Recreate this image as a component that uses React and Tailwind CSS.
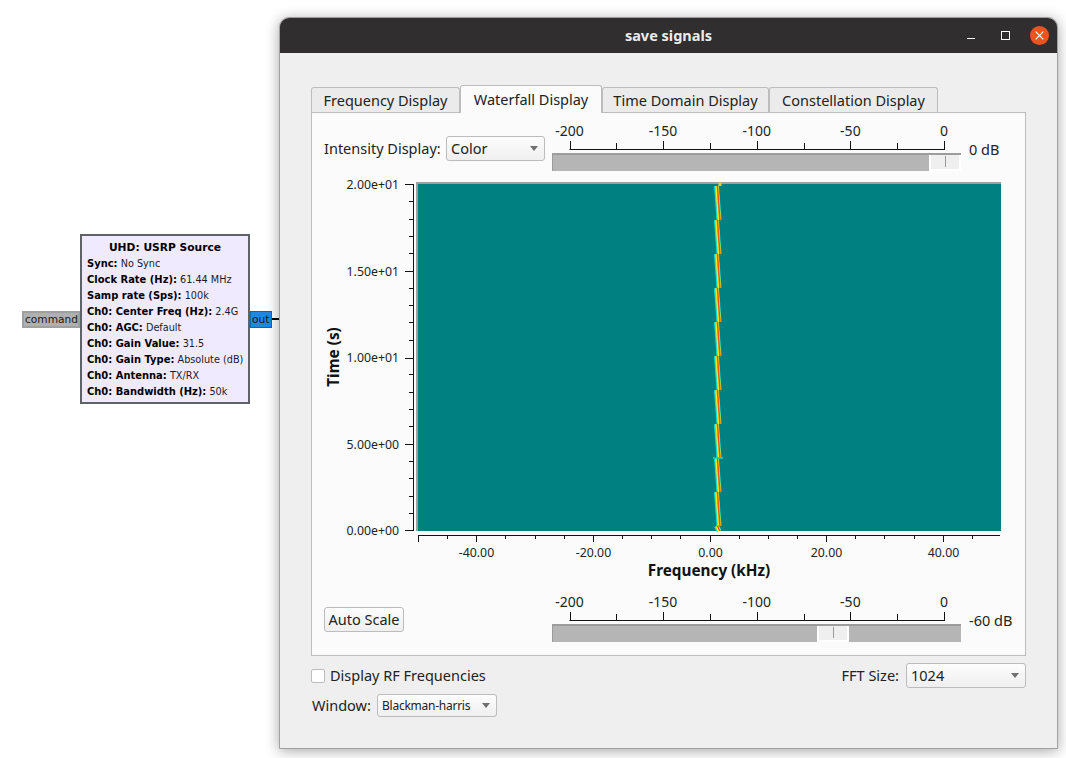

const blockRows = [
  ["Sync:", "No Sync"],
  ["Clock Rate (Hz):", "61.44 MHz"],
  ["Samp rate (Sps):", "100k"],
  ["Ch0: Center Freq (Hz):", "2.4G"],
  ["Ch0: AGC:", "Default"],
  ["Ch0: Gain Value:", "31.5"],
  ["Ch0: Gain Type:", "Absolute (dB)"],
  ["Ch0: Antenna:", "TX/RX"],
  ["Ch0: Bandwidth (Hz):", "50k"],
];

function Combo({ label, w, h, small }) {
  return (
    <div className={`flex items-center justify-between rounded-[3px] border border-[#bcbcbc] bg-gradient-to-b from-[#fdfdfd] to-[#efefef] pl-1 pr-[6px] ${w} ${h} ${small ? "text-[12px] tracking-[-0.25px]" : "text-[14.5px]"}`}>
      <span>{label}</span>
      <svg width="8" height="5" viewBox="0 0 8 5"><path d="M0 0h8L4 5z" fill="#707070" /></svg>
    </div>
  );
}

function Slider({ handle }) {
  const major = [-200, -150, -100, -50, 0];
  const minor = [-175, -125, -75, -25];
  const x = (v) => 17.5 + ((v + 200) / 200) * 374.5;
  return (
    <div className="w-[409px]">
      <svg width="409" height="30" className="block overflow-visible">
        <path d="M17.5 26.5H392" stroke="#111" fill="none" />
        {major.map((v) => (
          <g key={v}>
            <path d={`M${Math.round(x(v)) + 0.5} 18V27`} stroke="#111" />
            <text x={x(v)} y="12.5" textAnchor="middle" className="fill-[#222] text-[14px]">{v}</text>
          </g>
        ))}
        {minor.map((v) => (
          <path key={v} d={`M${Math.round(x(v)) + 0.5} 20V27`} stroke="#111" />
        ))}
      </svg>
      <div className="relative h-[18px] border-t-2 border-l border-[#9c9c9c] bg-[#b5b5b5]">
        <div className={`absolute top-0 flex h-[16px] w-[32px] justify-center border-2 border-t-0 border-white bg-[#efefef] ${handle}`}>
          <div className="mt-[1px] h-[11px] w-px bg-[#9a9a9a]" />
        </div>
      </div>
    </div>
  );
}

function Plot() {
  const bx = [-45, -35, -30, -25, -15, -10, -5, 5, 10, 15, 25, 30, 35, 45];
  const fx = (v) => Math.round(94 + ((v + 50) / 100) * 583) + 0.5;
  const Y = [11, 98, 184.5, 271, 357];
  const Ylabel = ["2.00e+01", "1.50e+01", "1.00e+01", "5.00e+00", "0.00e+00"];
  const segs = Array.from({ length: 11 }, (_, i) => 13 + i * 34);
  const minorY = [];
  for (let i = 0; i < 20; i++) if (i % 5) minorY.push(11 + i * 17.31);
  return (
    <svg width="690" height="421" className="block">
      <rect x="92" y="9" width="585" height="349" fill="#a0a0a0" />
      <rect x="94" y="11" width="583" height="347" fill="#008080" />
      {segs.map((s) => (
        <g key={s} fill="none">
          <path d={`M392.5 ${s}L395 ${Math.min(s + 34, 358)}`} stroke="#10e0d0" strokeWidth="5" />
          <path d={`M392.9 ${s}L395.4 ${Math.min(s + 34, 358)}`} stroke="#f4ee10" strokeWidth="3.2" />
          <path d={`M393.4 ${s}L395.9 ${Math.min(s + 34, 358)}`} stroke="#f8500a" strokeWidth="1.5" />
        </g>
      ))}
      <path d="M396 9.5V13" stroke="#e8d020" strokeWidth="3" />
      <path d="M389 285H399" stroke="#20c8b8" strokeWidth="1.6" />
      <path d="M89.5 11V358" stroke="#111" fill="none" />
      {Y.map((y, i) => (
        <g key={y}>
          <path d={`M81 ${Math.round(y) + 0.5}H90`} stroke="#111" />
          <text x="75" y={y + 4.5} textAnchor="end" className="fill-[#222] text-[12.3px]">{Ylabel[i]}</text>
        </g>
      ))}
      {minorY.map((y) => (
        <path key={y} d={`M85 ${Math.round(y) + 0.5}H90`} stroke="#111" />
      ))}
      <path d="M94 362.5H676" stroke="#111" />
      {[-50, -40, -20, 0, 20, 40].map((v) => (
        <path key={v} d={`M${fx(v)} 362V369`} stroke="#111" />
      ))}
      {bx.map((v) => (
        <path key={v} d={`M${fx(v)} 362V366`} stroke="#111" />
      ))}
      {[-40, -20, 0, 20, 40].map((v) => (
        <text key={v} x={fx(v)} y="384" textAnchor="middle" className="fill-[#222] text-[12.3px]">{v.toFixed(2)}</text>
      ))}
      <text x="385" y="402.5" textAnchor="middle" className="fill-[#111] text-[15.3px] font-bold">Frequency (kHz)</text>
      <text x="0" y="0" textAnchor="middle" transform="translate(15 184) rotate(-90)" className="fill-[#111] text-[15.3px] font-bold">Time (s)</text>
    </svg>
  );
}

function Tab({ label, active, w }) {
  return active ? (
    <div className={`z-10 -mb-px flex h-[28px] items-center justify-center rounded-t-[3px] border border-b-0 border-[#bdbdbd] bg-[#fbfbfb] ${w}`}>{label}</div>
  ) : (
    <div className={`flex h-[25px] items-center justify-center rounded-t-[3px] border border-b-0 border-[#bdbdbd] bg-[#ebebeb] pt-px ${w}`}>{label}</div>
  );
}

export default function App() {
  return (
    <div className="relative h-[758px] w-[1066px] overflow-hidden bg-white font-['Noto_Sans',sans-serif] text-[14.5px] text-[#222]">
      {/* flowgraph block */}
      <div className="absolute left-[22px] top-[311px] flex h-[17px] w-[58px] items-center border-2 border-[#a0a0a0] bg-[#b0b0b0] pl-[1px] pt-[1px] font-['DejaVu_Sans',sans-serif] text-[10.6px] text-[#1a1a1a]">command</div>
      <div className="absolute left-[250px] top-[311px] flex h-[17px] w-[22px] items-center border border-[#1565a8] bg-[#2088e0] pl-[1px] pt-[1px] font-['DejaVu_Sans',sans-serif] text-[10.6px] text-[#1a1a1a]">out</div>
      <div className="absolute left-[272px] top-[318px] h-[2px] w-[10px] bg-black" />
      <div className="absolute left-[80px] top-[234px] h-[170px] w-[170px] border-2 border-[#5f6368] bg-[#f0eaff] pl-[5px] pt-[4px] font-['DejaVu_Sans',sans-serif] text-[9.7px] leading-[16px] text-[#1a1a2a]">
        <div className="pr-[5px] text-center text-[10.7px] font-bold text-black">UHD: USRP Source</div>
        {blockRows.map(([k, v]) => (
          <div key={k} className="whitespace-nowrap">
            <span className="text-[9.95px] font-bold text-black">{k}</span> {v}
          </div>
        ))}
      </div>

      {/* window */}
      <div className="absolute left-[279px] top-[17px] flex h-[732px] w-[779px] flex-col rounded-t-[10px] border border-[#a0a0a0] bg-[#efefef] shadow-[0_2px_14px_rgba(0,0,0,0.35)]">
        <div className="relative flex h-[35px] shrink-0 items-center justify-center rounded-t-[9px] bg-[#302e2e] text-[14.5px] font-bold text-[#ececec]">
          save signals
          <div className="absolute left-[687px] top-[20px] h-px w-[8px] bg-white" />
          <div className="absolute left-[721px] top-[13px] h-[9px] w-[9px] border border-white" />
          <div className="absolute left-[749.5px] top-[8px] flex h-[19px] w-[19px] items-center justify-center rounded-full bg-[#e95420]">
            <svg width="9" height="9" viewBox="0 0 9 9"><path d="M.7.7l7.6 7.6M8.3.7L.7 8.3" stroke="#fff" strokeWidth="1.2" /></svg>
          </div>
        </div>

        <div className="flex flex-1 flex-col pl-[31px] pr-[30px] pt-[32px]">
          <div className="flex h-[27px] items-end">
            <Tab label="Frequency Display" w="w-[149px]" />
            <Tab label="Waterfall Display" active w="w-[142px]" />
            <Tab label="Time Domain Display" w="w-[167px]" />
            <Tab label="Constellation Display" w="w-[169px]" />
          </div>
          <div className="h-[544px] w-[715px] border border-[#bdbdbd] bg-[#fbfbfb] pl-3">
            <div className="flex h-[60px]">
              <div className="mt-[23px] flex h-[25px] items-center">
                <span className="w-[122px] pt-px">Intensity Display:</span>
                <Combo label="Color" w="w-[99px]" h="h-[25px]" />
              </div>
              <div className="ml-[7px] mt-[10px]">
                <Slider handle="right-0" />
              </div>
              <div className="ml-2 mt-[26px]">0 dB</div>
            </div>
            <Plot />
            <div className="flex">
              <div className="mt-[13px] flex h-[25px] w-[80px] items-center justify-center rounded-[3px] border border-[#bcbcbc] bg-gradient-to-b from-[#fdfdfd] to-[#efefef]">Auto Scale</div>
              <div className="ml-[148px]">
                <Slider handle="left-[264px]" />
              </div>
              <div className="ml-2 mt-[16px]">-60 dB</div>
            </div>
          </div>
          <div className="mt-[7px] flex h-[25px] w-[715px] items-center justify-between">
            <div className="flex items-center">
              <div className="h-[14px] w-[14px] rounded-[2px] border border-[#bcbcbc] bg-white" />
              <span className="ml-[5px]">Display RF Frequencies</span>
            </div>
            <div className="flex items-center">
              <span className="mr-[7px]">FFT Size:</span>
              <Combo label="1024" w="w-[120px]" h="h-[25px]" />
            </div>
          </div>
          <div className="mt-[6px] flex h-[23px] items-center">
            <span className="ml-px w-[65px]">Window:</span>
            <Combo label="Blackman-harris" w="w-[120px]" h="h-[23px]" small />
          </div>
        </div>
      </div>
    </div>
  );
}
